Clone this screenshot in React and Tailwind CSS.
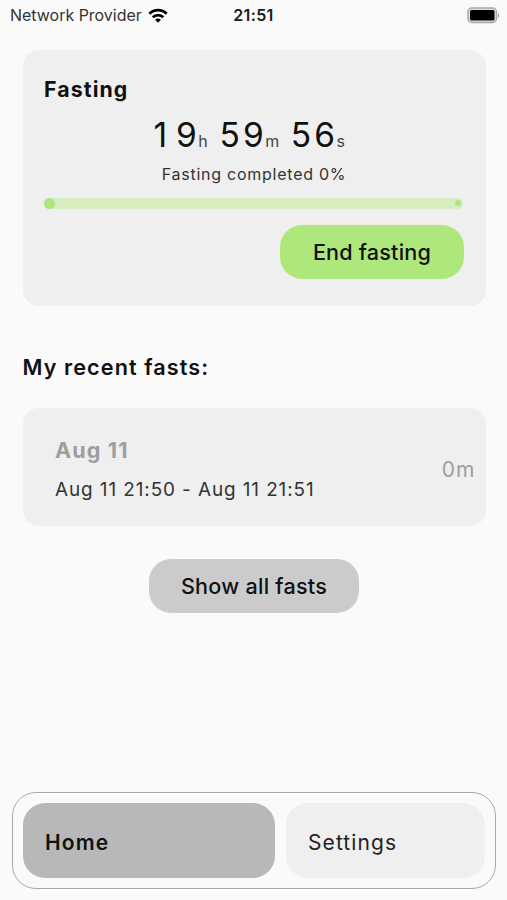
import React from 'react';

const timer = [
  { value: '19', unit: 'h' },
  { value: '59', unit: 'm' },
  { value: '56', unit: 's' },
];

const fasts = [
  { id: 1, day: 'Aug 11', range: 'Aug 11 21:50 - Aug 11 21:51', duration: '0m' },
];

const WifiIcon = () => (
  <svg width="20" height="15" viewBox="0 0 21 16" fill="none" stroke="#000" strokeWidth="3">
    <path d="M1.3 6.1C6.5 0.9 14.5 0.9 19.7 6.1" />
    <path d="M4.9 9.9C8 6.8 13 6.8 16.1 9.9" />
    <path d="M10.5 15.6L7.4 12.4C9.2 10.9 11.8 10.9 13.6 12.4Z" fill="#000" stroke="none" />
  </svg>
);

const BatteryIcon = () => (
  <svg width="33" height="17" viewBox="0 0 33 17" fill="none">
    <rect x="1" y="1" width="28.5" height="14.5" rx="4" fill="#e0e0e0" stroke="#a8a8a8" strokeWidth="1.5" />
    <rect x="3" y="3" width="24.5" height="10.5" rx="1.5" fill="#000" />
    <path d="M31 6V11C32.6 10.5 32.6 6.5 31 6Z" fill="#a8a8a8" />
  </svg>
);

const StatusBar = () => (
  <div className="grid grid-cols-[1fr_auto_1fr] items-center h-[29px] pl-[10px] pr-[7px] text-[16px] leading-[29px]">
    <div className="flex items-center gap-[6px] text-[#333]">
      <span className="pt-px tracking-[-0.02px]">Network Provider</span>
      <WifiIcon />
    </div>
    <span className="pt-px -ml-[3px] tracking-[0.35px] font-semibold text-[#1a1a1a]">21:51</span>
    <div className="flex justify-end">
      <BatteryIcon />
    </div>
  </div>
);

const FastingCard = () => (
  <section className="mt-[21px] ml-[22.5px] mr-[21.5px] h-[256px] rounded-[16px] bg-[#efefef] px-[21.5px] pt-[26px]">
    <h2 className="text-[21.3px] leading-[26px] font-bold tracking-[1.1px]">Fasting</h2>
    <div className="mt-[12px] -ml-[12px] flex items-baseline justify-center h-[42px] leading-[42px] gap-[10px]">
      {timer.map((part) => (
        <div key={part.unit} className="flex items-baseline">
          {part.value.split('').map((digit, idx) => (
            <span
              key={idx}
              className={`w-[23.7px] text-center text-[33.5px] ${digit === '1' ? 'pr-[5px]' : ''}`}
            >
              {digit}
            </span>
          ))}
          <span className="text-[16px] text-[#444]">{part.unit}</span>
        </div>
      ))}
    </div>
    <p className="mt-[8px] text-center text-[16px] leading-[20px] tracking-[0.75px] text-[#333]">
      Fasting completed 0%
    </p>
    <div className="mt-[14px] flex h-[10.5px] w-[419px] items-center justify-between rounded-full bg-[#d6edc0] pr-[2px]">
      <span className="size-[11px] rounded-full bg-[#aee57c]"></span>
      <span className="size-[6px] rounded-full bg-[#aee57c]"></span>
    </div>
    <div className="mt-[16.5px] flex justify-end">
      <button className="h-[54px] w-[184px] rounded-[22px] bg-[#aee87c] text-[21.6px] font-medium tracking-[0.2px] text-[#111]">
        End fasting
      </button>
    </div>
  </section>
);

const FastRow = ({ fast }) => (
  <div className="flex h-[118px] items-center justify-between rounded-[16px] bg-[#efefef] pl-[32.5px] pr-[10px] pt-[5px]">
    <div>
      <p className="text-[21.6px] leading-[26px] font-bold tracking-[1.1px] text-[#9e9e9e]">{fast.day}</p>
      <p className="mt-[15px] text-[18.9px] leading-6 tracking-[0.92px] text-[#333]">{fast.range}</p>
    </div>
    <span className="text-[21px] tracking-[1px] text-[#9e9e9e]">{fast.duration}</span>
  </div>
);

const BottomNav = () => (
  <nav className="mt-auto mb-[11px] ml-[12px] mr-[11px] flex h-[97px] gap-[11px] rounded-[24px] border-[1.5px] border-[#a8a8a8] p-[10px] text-[21px] tracking-[1.1px]">
    <button className="w-[252px] rounded-[22px] bg-[#b8b8b8] pl-[22px] pt-[4px] text-left font-semibold">Home</button>
    <button className="flex-1 rounded-[22px] bg-[#efefef] pl-[22px] pt-[4px] text-left text-[#222]">Settings</button>
  </nav>
);

export default function App() {
  return (
    <div className="flex h-[900px] w-[507px] flex-col overflow-hidden bg-[#fafafa] font-['Inter',sans-serif] text-[#111]">
      <StatusBar />
      <FastingCard />
      <section className="ml-[22.5px] mr-[21.5px] mt-[48px]">
        <h2 className="mb-[28px] text-[21.6px] leading-[26px] font-semibold tracking-[1.1px]">My recent fasts:</h2>
        {fasts.map((fast) => (
          <FastRow key={fast.id} fast={fast} />
        ))}
        <div className="mt-[33px] flex justify-center">
          <button className="h-[54px] w-[210px] rounded-[22px] bg-[#cbcbcb] text-[21.6px] font-medium tracking-[0.25px] text-[#111]">
            Show all fasts
          </button>
        </div>
      </section>
      <BottomNav />
    </div>
  );
}
